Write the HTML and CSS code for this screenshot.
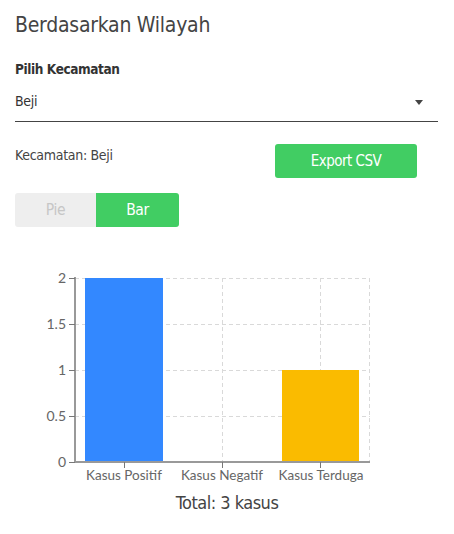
FILE: index.html
```html
<!DOCTYPE html>
<html lang="id">
<head>
<meta charset="utf-8">
<link rel="stylesheet" href="styles.css">
</head>
<body>
<div class="page">
  <h2 class="title">Berdasarkan Wilayah</h2>
  <label class="field-label">Pilih Kecamatan</label>
  <div class="select">
    <span class="select-value">Beji</span>
    <span class="caret"></span>
  </div>
  <div class="info-row">
    <span class="info-text">Kecamatan: Beji</span>
    <button class="btn-export">Export CSV</button>
  </div>
  <div class="toggle">
    <span class="toggle-btn off">Pie</span>
    <span class="toggle-btn on">Bar</span>
  </div>
  <svg class="chart" width="454" height="235" viewBox="0 0 454 235">
    <g class="grid" stroke="#d9d9d9" stroke-width="1" stroke-dasharray="4 3" fill="none">
      <line x1="75" y1="23.5" x2="370" y2="23.5"/>
      <line x1="75" y1="69.5" x2="370" y2="69.5"/>
      <line x1="75" y1="115.5" x2="370" y2="115.5"/>
      <line x1="75" y1="161.5" x2="370" y2="161.5"/>
      <line x1="124.5" y1="23" x2="124.5" y2="207"/>
      <line x1="222.5" y1="23" x2="222.5" y2="207"/>
      <line x1="320.5" y1="23" x2="320.5" y2="207"/>
      <line x1="369.5" y1="23" x2="369.5" y2="207"/>
    </g>
    <rect x="85" y="23" width="78" height="184" fill="#3388ff"/>
    <rect x="282" y="115" width="77" height="92" fill="#fabb00"/>
    <g stroke="#999" stroke-width="2" fill="none">
      <line x1="75" y1="22" x2="75" y2="208"/>
      <line x1="74" y1="207" x2="370" y2="207"/>
    </g>
    <g stroke="#777" stroke-width="1">
      <line x1="69" y1="23.5" x2="75" y2="23.5"/>
      <line x1="69" y1="69.5" x2="75" y2="69.5"/>
      <line x1="69" y1="115.5" x2="75" y2="115.5"/>
      <line x1="69" y1="161.5" x2="75" y2="161.5"/>
      <line x1="69" y1="207.5" x2="75" y2="207.5"/>
      <line x1="124.5" y1="207" x2="124.5" y2="213"/>
      <line x1="222.5" y1="207" x2="222.5" y2="213"/>
      <line x1="320.5" y1="207" x2="320.5" y2="213"/>
    </g>
    <g class="axis-text y-text" text-anchor="end">
      <text x="66" y="28">2</text>
      <text x="66" y="74">1.5</text>
      <text x="66" y="120">1</text>
      <text x="66" y="166">0.5</text>
      <text x="66" y="212">0</text>
    </g>
    <g class="axis-text" text-anchor="middle">
      <text x="124" y="225">Kasus Positif</text>
      <text x="222" y="225">Kasus Negatif</text>
      <text x="321" y="225">Kasus Terduga</text>
    </g>
  </svg>
  <div class="total">Total: 3 kasus</div>
</div>
</body>
</html>
```
FILE: styles.css
```css
html, body {
  margin: 0;
  padding: 0;
  background: #fff;
}
.page {
  padding: 10px 16px 0 15px;
  font-family: "DejaVu Sans Condensed", "DejaVu Sans", sans-serif;
  color: #444;
}
.title {
  margin: 0;
  font-weight: 400;
  font-size: 21px;
  letter-spacing: -0.25px;
  line-height: 30px;
  color: #444;
}
.field-label {
  display: block;
  margin-top: 20px;
  font-weight: 700;
  font-size: 13.5px;
  letter-spacing: -0.4px;
  line-height: 18px;
  color: #333;
}
.select {
  display: flex;
  align-items: center;
  justify-content: space-between;
  margin-top: 12px;
  height: 31px;
  padding-right: 15px;
  border-bottom: 1px solid #444;
  width: 408px;
}
.select-value {
  font-size: 14px;
  letter-spacing: -0.3px;
  color: #333;
  margin-top: -9px;
}
.caret {
  width: 0;
  height: 0;
  border-left: 4.5px solid transparent;
  border-right: 4.5px solid transparent;
  border-top: 5px solid #444;
  margin-top: -6px;
}
.info-row {
  display: flex;
  align-items: flex-start;
  margin-top: 22px;
}
.info-text {
  font-size: 14px;
  letter-spacing: -0.3px;
  color: #444;
  line-height: 18px;
  margin-top: 2px;
  width: 260px;
}
.btn-export {
  width: 142px;
  height: 34px;
  border: 0;
  border-radius: 3px;
  background: #41cd63;
  color: #fff;
  font-family: inherit;
  font-size: 15px;
  letter-spacing: -0.5px;
  padding: 0;
}
.toggle {
  display: flex;
  width: 164px;
  height: 34px;
  margin-top: 15px;
  border-radius: 3px;
  overflow: hidden;
}
.toggle-btn {
  display: flex;
  align-items: center;
  justify-content: center;
  font-size: 15.5px;
  letter-spacing: -0.4px;
}
.toggle-btn.off {
  width: 81px;
  background: #eeeeee;
  color: #c6c6c6;
}
.toggle-btn.on {
  width: 83px;
  background: #41cd63;
  color: #fff;
}
.chart {
  display: block;
  margin: 28px 0 0 -15px;
}
.axis-text {
  font-family: Lato, sans-serif;
  font-size: 13.5px;
  fill: #666;
}
.y-text {
  font-size: 14px;
}
.total {
  width: 424px;
  text-align: center;
  margin-top: 2px;
  font-size: 18px;
  letter-spacing: -0.5px;
  color: #444;
}
```
